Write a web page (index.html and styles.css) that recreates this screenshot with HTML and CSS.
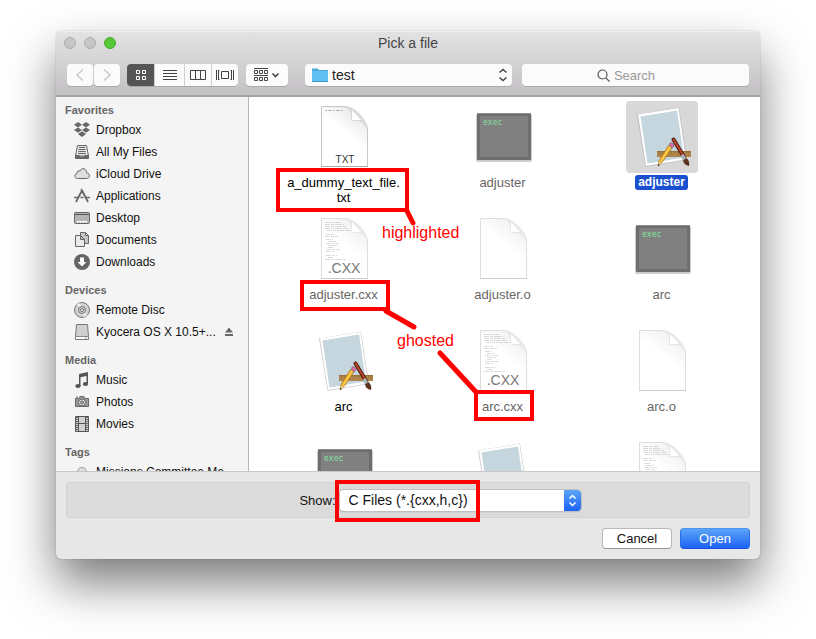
FILE: index.html
```html
<!DOCTYPE html>
<html lang="en">
<head>
    <meta charset="UTF-8">
    <meta name="viewport" content="width=device-width, initial-scale=1.0">
    <title>Pick a file</title>
    <link rel="stylesheet" href="styles.css">
</head>
<body>
    <!-- Shared file icons -->
    <svg class="defs" width="0" height="0" aria-hidden="true">
        <defs>
            <linearGradient id="page" x1="0.1" y1="1" x2="0.7" y2="0">
                <stop offset="0.6" stop-color="#fff"/>
                <stop offset="1" stop-color="#e6e6e6"/>
            </linearGradient>
            <symbol id="doc" viewBox="0 0 72 72">
                <path d="M13.5 5.500H36C47 5.500 59.500 20 59.500 29V65.500H13.500Z" fill="url(#page)" stroke="#c6c6c6"/>
                <path d="M13 65.500H60" stroke="#aaa"/>
                <path d="M36 6C41 7 43.500 10 43.500 19.500C52 19 57 22 59 29C57 19 46 7 36 6Z" fill="#d8d8d8"/>
                <path d="M43.500 8V19.500H54Z" fill="#fff" stroke="#d2d2d2" stroke-width=".8"/>
            </symbol>
            <symbol id="code" viewBox="0 0 72 72">
                <path d="M17 9.500H32M17 11.500H36M17 13.500H38M17 15.500H41M19 17.500H42M17 21.500H27M17 23.500H30M18 26.500H25M20 28.500H28M18 30.500H31M20 32.500H29M20 34.500H25M18 36.500H32M18 38.500H26M18 42.500H29M20 44.500H25M17 46.500H38" stroke="#777" stroke-width=".8" stroke-dasharray="5 1 3 1 7 1" opacity=".55"/>
            </symbol>
            <symbol id="exec" viewBox="0 0 72 72">
                <rect x="9" y="13" width="56" height="48" rx="2" fill="#ccc"/>
                <rect x="10" y="12" width="54" height="47" rx="1" fill="#6e6e6e"/>
                <path d="M10.500 12.500H63.500" stroke="#86908f"/>
                <rect x="13" y="15" width="48" height="41" fill="#808080"/>
                <text x="16" y="24" class="exec-text">exec</text>
            </symbol>
            <symbol id="app" viewBox="0 0 72 72">
                <path d="M11 13.500L53 6.500L61 59L19.500 66Z" fill="#aaa" opacity=".6"/>
                <path d="M12 13.500L52.500 7L60 58.500L20 65Z" fill="#fff"/>
                <path d="M14.500 15.500L51 9.500L58 56.500L21.500 62.500Z" fill="#c6d6de"/>
                <rect x="31" y="50" width="34" height="6" fill="#ae8449"/>
                <path d="M31 50.500H65M33.500 50V53M36.500 50V52M39.500 50V53M42.500 50V52M45.500 50V53M48.500 50V52M51.500 50V53M54.500 50V52M57.500 50V53M60.500 50V52M63 50V53" stroke="#8d6735" stroke-width=".6"/>
                <path d="M47.500 38.500L58 56" stroke="#551b12" stroke-width="4" stroke-linecap="round"/>
                <path d="M47.500 38.500L57.500 55" stroke="#bd4a2c" stroke-width="1.800" stroke-linecap="round"/>
                <path d="M56 54L59 59" stroke="#a7b7bc" stroke-width="3.600"/>
                <path d="M57 59.500L60.500 57Q64 60 63 65Q58 64 57 59.500Z" fill="#5b321a"/>
                <path d="M32 65L33 59.500L42.500 44.500L46 47L36 61.500Z" fill="#f4b32c" stroke="#8e6114" stroke-width=".6"/>
                <path d="M35 60.500L44 46" stroke="#ffdc65"/>
                <path d="M43 44L44.500 41.500Q48 42 48 44.500L46.500 47Z" fill="#e9669c" stroke="#587889" stroke-width=".6"/>
                <path d="M32 65L33 60.500L36 62Z" fill="#e9c891"/>
                <path d="M32 65L32.500 63L34 64Z" fill="#222"/>
            </symbol>
        </defs>
    </svg>

    <main class="dialog">
        <header class="header">
            <div class="titlebar">
                <div class="lights">
                    <button class="light" aria-label="Close"></button>
                    <button class="light" aria-label="Minimize"></button>
                    <button class="light light-zoom" aria-label="Zoom"></button>
                </div>
                <h1 class="title">Pick a file</h1>
            </div>
            <div class="toolbar">
                <div class="nav">
                    <button class="tool" aria-label="Back">
                        <svg width="12" height="14" viewBox="0 0 12 14" fill="none" stroke="#c9c9c9" stroke-width="1.500"><path d="M9 1.500L3 7L9 12.500"/></svg>
                    </button>
                    <button class="tool" aria-label="Forward">
                        <svg width="12" height="14" viewBox="0 0 12 14" fill="none" stroke="#c9c9c9" stroke-width="1.500"><path d="M3 1.500L9 7L3 12.500"/></svg>
                    </button>
                </div>
                <div class="views">
                    <button class="view active" aria-label="Icons">
                        <svg width="12" height="12" viewBox="0 0 12 12" fill="none" stroke="#fff"><path d="M1.500 1.500h3v3h-3zM7.500 1.500h3v3h-3zM1.500 7.500h3v3h-3zM7.500 7.500h3v3h-3z"/></svg>
                    </button>
                    <button class="view view-list" aria-label="List">
                        <svg width="14" height="12" viewBox="0 0 14 12" stroke="#444"><path d="M0 1.500H14M0 4.500H14M0 7.500H14M0 10.500H14"/></svg>
                    </button>
                    <button class="view" aria-label="Columns">
                        <svg width="16" height="12" viewBox="0 0 16 12" fill="none" stroke="#444"><path d="M.5 1.500h15v9H.5zM5.500 1.500v9M10.500 1.500v9"/></svg>
                    </button>
                    <button class="view" aria-label="Cover Flow">
                        <svg width="18" height="12" viewBox="0 0 18 12" fill="none" stroke="#444"><path d="M.5 1V11M2.500 1V11M15.500 1V11M17.500 1V11M5.500 2.500h7v7h-7zM2.500 1.500h1M2.500 10.500h1M14.500 1.500h1M14.500 10.500h1"/></svg>
                    </button>
                </div>
                <button class="tool arrange" aria-label="Arrange">
                    <svg width="26" height="14" viewBox="0 0 26 14" fill="none" stroke="#444"><path d="M0 .5H14M0 7.500H14M.5 2.500h3v3h-3zM5.500 2.500h3v3h-3zM10.500 2.500h3v3h-3zM.5 9.500h3v3h-3zM5.500 9.500h3v3h-3zM10.500 9.500h3v3h-3z"/><path d="M18.500 5.500L21.500 8.500L24.500 5.500" stroke-width="1.600"/></svg>
                </button>
                <div class="path">
                    <svg width="16" height="16" viewBox="0 0 16 16">
                        <path d="M0 1.500H5.500L7 3H16V15H0Z" fill="#4ba8da"/>
                        <path d="M0 4H16V14H0Z" fill="#62c1f4"/>
                        <path d="M0 14.500H16" stroke="#3d94c5"/>
                    </svg>
                    <select class="path-select" aria-label="Folder">
                        <option>test</option>
                    </select>
                    <svg width="8" height="14" viewBox="0 0 8 14" fill="none" stroke="#444" stroke-width="1.500"><path d="M.5 4.500L4 1.500L7.500 4.500M.5 9.500L4 12.500L7.500 9.500"/></svg>
                </div>
                <label class="search">
                    <svg width="13" height="13" viewBox="0 0 13 13" fill="none" stroke="#555" stroke-width="1.200"><circle cx="5.500" cy="5.500" r="4.500"/><path d="M8.800 8.800L12.500 12.500"/></svg>
                    <input class="search-input" type="search" placeholder="Search" aria-label="Search">
                </label>
            </div>
        </header>

        <div class="browser">
            <nav class="sidebar" aria-label="Places">
                <h2 class="group">Favorites</h2>
                <a class="place" href="#">
                    <svg width="16" height="16" viewBox="0 0 16 16" fill="#666"><path d="M4 0L8 2.700L4 5.400L0 2.700ZM12 0L16 2.700L12 5.400L8 2.700ZM4 5.400L8 8.100L4 10.800L0 8.100ZM12 5.400L16 8.100L12 10.800L8 8.100ZM8 9.200L12 12L8 15L4 12Z"/></svg>
                    Dropbox
                </a>
                <a class="place" href="#">
                    <svg width="16" height="16" viewBox="0 0 16 16" fill="none" stroke="#666"><path d="M3.500 1.500H12.500L14.500 12H1.500Z" fill="#e4e4e4"/><path d="M5 3.500H11M4.500 5.500H11.500M4.500 7.500H11.500M4 9.500H12"/><path d="M1.500 11.500H5L6 13H10L11 11.500H14.500V14.500H1.500Z" fill="#666"/></svg>
                    All My Files
                </a>
                <a class="place" href="#">
                    <svg width="16" height="16" viewBox="0 0 16 16" fill="#dedede" stroke="#666"><path d="M3.500 12.500C-.2 12.300-.1 7.800 3 7.500C2.800 5 5 4.200 6 5C7.500 1 13 2.500 12.500 6.800C16.400 7 16.400 12.500 12.500 12.500Z"/></svg>
                    iCloud Drive
                </a>
                <a class="place" href="#">
                    <svg width="16" height="16" viewBox="0 0 16 16" fill="none" stroke="#666"><path d="M8 2.500L2 14M8 2.500L14 14" stroke-width="1.800"/><path d="M0 9.500H5M6.500 9.500H9.500M11.500 9.500H16M7 1L9 4" stroke-width="1.500"/></svg>
                    Applications
                </a>
                <a class="place" href="#">
                    <svg width="16" height="16" viewBox="0 0 16 16" fill="#b4b4b4" stroke="#666"><rect x=".5" y="2.500" width="15" height="11" rx="1"/><path d="M1 4.500H15" stroke="#555"/><path d="M3 11.500H13M3.500 11V13M6.500 11V13M9.500 11V13M12.500 11V13" stroke="#fff"/></svg>
                    Desktop
                </a>
                <a class="place" href="#">
                    <svg width="16" height="16" viewBox="0 0 16 16" fill="#c6c6c6" stroke="#666"><path d="M6.500.5H11.500L14.500 3.500V11.500H6.500ZM11.500.5V3.500H14.500"/><path d="M1.500 3.500H6.500L10.500 7.500V14.500H1.500ZM6.500 3.500V7.500H10.500" fill="#eaeaea"/></svg>
                    Documents
                </a>
                <a class="place" href="#">
                    <svg width="16" height="16" viewBox="0 0 16 16"><circle cx="8" cy="8" r="8" fill="#666"/><path d="M6 3.500H10V8H12.500L8 12.500L3.500 8H6Z" fill="#fff"/></svg>
                    Downloads
                </a>

                <h2 class="group">Devices</h2>
                <a class="place" href="#">
                    <svg width="16" height="16" viewBox="0 0 16 16" fill="#d2d2d2" stroke="#777"><circle cx="8" cy="8" r="7.500"/><path d="M8 8L3 2.500L6 1ZM8 8L13 13.500L10 15Z" fill="#f2f2f2" stroke="none"/><circle cx="8" cy="8" r="3.500"/><circle cx="8" cy="8" r="1.500" fill="#f4f4f4"/></svg>
                    Remote Disc
                </a>
                <a class="place" href="#">
                    <svg width="16" height="16" viewBox="0 0 16 16" fill="#d0d0d0" stroke="#777"><path d="M2.500.5H13.500L14.500 12.500V15.500H1.500V12.500Z"/><path d="M2 12.500H14" stroke="#888"/><path d="M2 13H14V15H2Z" fill="#fff" stroke="none"/><path d="M11 14H12.500"/></svg>
                    <span class="place-name">Kyocera OS X 10.5+...</span>
                    <svg width="8" height="10" viewBox="0 0 8 10" fill="#666"><path d="M4 .5L8 5.500H0ZM0 7H8V9H0Z"/></svg>
                </a>

                <h2 class="group">Media</h2>
                <a class="place" href="#">
                    <svg width="16" height="16" viewBox="0 0 16 16" fill="#555"><path d="M5 2L14 0V12H12.500V4L6.500 5.200V14H5Z"/><ellipse cx="4" cy="14" rx="2.700" ry="2"/><ellipse cx="11.500" cy="12" rx="2.700" ry="2"/></svg>
                    Music
                </a>
                <a class="place" href="#">
                    <svg width="16" height="16" viewBox="0 0 16 16" fill="#999" stroke="#666"><path d="M1.500 4.500H5L6 2.500H10L11 4.500H14.500V12.500H1.500ZM2 3H4"/><circle cx="8" cy="8.500" r="3.500" fill="#ddd"/><circle cx="8" cy="8.500" r="1.500" fill="#aaa"/></svg>
                    Photos
                </a>
                <a class="place" href="#">
                    <svg width="16" height="16" viewBox="0 0 16 16" fill="#d0d0d0" stroke="#555"><path d="M1.500.5H14.500V15.500H1.500ZM4.500.5V15.500M11.500.5V15.500M4.500 7.500H11.500"/><path d="M3 1V15M13 1V15" stroke="#666" stroke-width="2" stroke-dasharray="1 1"/></svg>
                    Movies
                </a>

                <h2 class="group">Tags</h2>
                <a class="place" href="#">
                    <svg width="16" height="16" viewBox="0 0 16 16" fill="#e2e2e2" stroke="#999"><circle cx="8" cy="8" r="4.500"/></svg>
                    Missions Committee Me...
                </a>
            </nav>

            <section class="files" aria-label="Files">
                <button class="file">
                    <svg class="thumb" viewBox="0 0 72 72"><use href="#doc"/><path d="M17 9.500H35" stroke="#aaa" stroke-width=".8" stroke-dasharray="2 1 4 1"/><text x="37" y="62" class="txt-text">TXT</text></svg>
                    <span class="name">a_dummy_text_file.<br>txt</span>
                </button>
                <button class="file ghosted">
                    <svg class="thumb" viewBox="0 0 72 72"><use href="#exec"/></svg>
                    <span class="name">adjuster</span>
                </button>
                <button class="file selected">
                    <svg class="thumb" viewBox="0 0 72 72"><use href="#app"/></svg>
                    <span class="name">adjuster</span>
                </button>

                <button class="file ghosted">
                    <svg class="thumb" viewBox="0 0 72 72"><g opacity=".6"><use href="#doc"/><use href="#code"/></g><text x="36" y="60" class="ext-text">.CXX</text></svg>
                    <span class="name">adjuster.cxx</span>
                </button>
                <button class="file ghosted">
                    <svg class="thumb" viewBox="0 0 72 72"><use href="#doc" opacity=".6"/></svg>
                    <span class="name">adjuster.o</span>
                </button>
                <button class="file ghosted">
                    <svg class="thumb" viewBox="0 0 72 72"><use href="#exec"/></svg>
                    <span class="name">arc</span>
                </button>

                <button class="file">
                    <svg class="thumb" viewBox="0 0 72 72"><use href="#app"/></svg>
                    <span class="name">arc</span>
                </button>
                <button class="file ghosted">
                    <svg class="thumb" viewBox="0 0 72 72"><g opacity=".6"><use href="#doc"/><use href="#code"/></g><text x="36" y="60" class="ext-text">.CXX</text></svg>
                    <span class="name">arc.cxx</span>
                </button>
                <button class="file ghosted">
                    <svg class="thumb" viewBox="0 0 72 72"><use href="#doc" opacity=".6"/></svg>
                    <span class="name">arc.o</span>
                </button>

                <button class="file ghosted" aria-label="Program">
                    <svg class="thumb" viewBox="0 0 72 72"><use href="#exec"/></svg>
                </button>
                <button class="file" aria-label="Application">
                    <svg class="thumb" viewBox="0 0 72 72"><use href="#app"/></svg>
                </button>
                <button class="file ghosted" aria-label="Source file">
                    <svg class="thumb" viewBox="0 0 72 72"><g opacity=".6"><use href="#doc"/><use href="#code"/></g></svg>
                </button>
            </section>
        </div>

        <footer class="footer">
            <div class="filter">
                <label for="show">Show:</label>
                <div class="filter-box">
                    <select class="filter-select" id="show">
                        <option>C Files (*.{cxx,h,c})</option>
                    </select>
                    <svg class="filter-arrows" viewBox="0 0 17 21" fill="none" stroke="#fff" stroke-width="1.500"><path d="M5.500 8.500L8.500 5.500L11.500 8.500M5.500 12.500L8.500 15.500L11.500 12.500"/></svg>
                </div>
            </div>
            <div class="actions">
                <button class="btn">Cancel</button>
                <button class="btn btn-primary">Open</button>
            </div>
        </footer>

        <!-- Red call-outs drawn over the dialog -->
        <svg class="callouts" width="704" height="528" viewBox="0 0 704 528">
            <g fill="none" stroke="#f00" stroke-width="4">
                <rect x="222" y="139" width="129" height="40"/>
                <rect x="246" y="251" width="86" height="27"/>
                <rect x="420" y="361" width="56" height="27"/>
                <rect x="281" y="451" width="141" height="38"/>
            </g>
            <path d="M351 180L357 192M330 280L358 296M384 322L420 361" stroke="#f00" stroke-width="5" stroke-linecap="round"/>
            <text x="326" y="207" class="callout-text">highlighted</text>
            <text x="341" y="315" class="callout-text">ghosted</text>
        </svg>
    </main>
</body>
</html>
```

FILE: styles.css
```css
* {
    box-sizing: border-box;
}

body {
    font-family: "Liberation Sans", Arial, sans-serif;
    font-size: 13px;
    color: #111;
    background-color: #fff;
    margin: 0;
    padding: 31px 56px 80px;
}

button, input, select {
    font: inherit;
    color: inherit;
    margin: 0;
    padding: 0;
    border: 0;
    background: none;
}

svg {
    display: block;
    flex-shrink: 0;
}

.defs {
    position: absolute;
}

.dialog {
    position: relative;
    border-radius: 5px;
    background-color: #e7e7e7;
    box-shadow: 0 0 1px rgba(0, 0, 0, 0.5), 0 24px 48px rgba(0, 0, 0, 0.52);
}

/* Title bar and toolbar */
.header {
    border-radius: 5px 5px 0 0;
    border-bottom: 2px solid #a3a2a3;
    background: linear-gradient(#e4e3e4, #c3c1c3);
    box-shadow: inset 0 1px 0 #f0f0f0;
    padding-bottom: 9px;
}

.titlebar {
    display: grid;
    grid-template-columns: 1fr auto 1fr;
    align-items: center;
    height: 24px;
    margin-bottom: 9px;
}

.lights {
    display: flex;
    gap: 8px;
    padding-left: 8px;
}

.light {
    width: 12px;
    height: 12px;
    border-radius: 50%;
    border: 1px solid #adadad;
    background-color: #c6c6c6;
}

.light-zoom {
    border-color: #47ac2b;
    background-color: #57c837;
}

.title {
    margin: 0;
    font-size: 14px;
    font-weight: normal;
    color: #444;
}

.toolbar {
    display: flex;
    height: 22px;
    padding: 0 11px;
}

.nav {
    display: flex;
    gap: 1px;
    margin-right: 7px;
}

.tool, .views, .path, .search {
    display: flex;
    align-items: center;
    justify-content: center;
    border-radius: 4px;
    background-color: #fbfbfb;
    box-shadow: 0 1px 0 #aaa9aa;
}

.tool {
    width: 26px;
}

.views {
    overflow: hidden;
    margin-right: 8px;
}

.view {
    display: flex;
    align-items: center;
    justify-content: center;
    width: 27px;
    height: 22px;
    border-left: 1px solid #d0d0d0;
}

.view-list {
    width: 30px;
}

.view.active {
    border-left: 0;
    background-color: #555;
}

.arrange {
    width: 42px;
    margin-right: 17px;
}

.path {
    flex: 6;
    gap: 4px;
    padding: 0 5px 0 7px;
    margin-right: 10px;
}

.path-select {
    flex: 1;
    min-width: 0;
    appearance: none;
    font-size: 14px;
    color: #222;
}

.search {
    flex: 7;
    gap: 4px;
}

.search-input {
    width: 60px;
    outline: none;
}

.search-input::placeholder {
    color: #999;
}

/* Sidebar and file grid */
.browser {
    display: flex;
    height: 374px;
    overflow: hidden;
    background-color: #fff;
}

.sidebar {
    width: 193px;
    padding-top: 4px;
    border-right: 1px solid #b5b5b5;
    background-color: #f4f4f4;
}

.group {
    margin: 8px 0 0;
    padding-left: 9px;
    font-size: 11px;
    line-height: 18px;
    color: #666;
}

.group:first-child {
    margin-top: 0;
}

.place {
    display: flex;
    align-items: center;
    gap: 6px;
    height: 22px;
    padding: 0 15px 0 18px;
    font-size: 12px;
    white-space: nowrap;
    color: #111;
    text-decoration: none;
}

.place-name {
    flex: 1;
}

.files {
    flex: 1;
    display: grid;
    grid-template-columns: repeat(3, 1fr);
    grid-auto-rows: 112px;
    padding: 4px 19px 0 15px;
}

.file {
    display: flex;
    flex-direction: column;
    align-items: center;
    gap: 2px;
    color: #000;
}

.thumb {
    width: 72px;
    height: 72px;
    border-radius: 4px;
}

.name {
    padding: 0 3px;
    border-radius: 3px;
    line-height: 15px;
}

.ghosted {
    color: #666;
}

.selected .thumb {
    background-color: #d8d8d8;
}

.selected .name {
    color: #fff;
    background-color: #1a50d0;
    font-weight: bold;
    font-size: 12px;
}

.exec-text {
    font-family: "DejaVu Sans Mono", monospace;
    font-size: 8px;
    fill: #84e29f;
}

.txt-text {
    font-size: 10px;
    text-anchor: middle;
    fill: #333;
}

.ext-text {
    font-size: 14px;
    text-anchor: middle;
    fill: #777;
}

/* Footer */
.footer {
    padding: 10px;
    border-top: 1px solid #c8c8c8;
}

.filter {
    display: flex;
    align-items: center;
    justify-content: center;
    gap: 4px;
    height: 36px;
    padding-left: 64px;
    border: 1px solid #d2d2d2;
    border-radius: 4px;
    background-color: #dbdbdb;
}

.filter-box {
    display: flex;
    width: 241px;
    height: 21px;
    border-radius: 4px;
    overflow: hidden;
    background-color: #fff;
    box-shadow: 0 0 0 1px #c0c0c0, 0 1px 1px #999;
}

.filter-select {
    flex: 1;
    min-width: 0;
    padding-left: 9px;
    appearance: none;
    font-size: 14px;
}

.filter-arrows {
    width: 17px;
    height: 21px;
    background: linear-gradient(#5ba4f6, #1c62f6);
}

.actions {
    display: flex;
    justify-content: flex-end;
    gap: 8px;
    margin-top: 10px;
}

.btn {
    min-width: 70px;
    height: 21px;
    border: 1px solid #b8b8b8;
    border-bottom-color: #999;
    border-radius: 4px;
    background-color: #fff;
}

.btn-primary {
    color: #fff;
    border-color: #4a94ee #2a70ee #1a50e0;
    background: linear-gradient(#5ba4f6, #1c62f6);
}

/* Call-outs */
.callouts {
    position: absolute;
    top: 0;
    left: 0;
    pointer-events: none;
}

.callout-text {
    font-size: 16px;
    fill: #f00;
}
```
